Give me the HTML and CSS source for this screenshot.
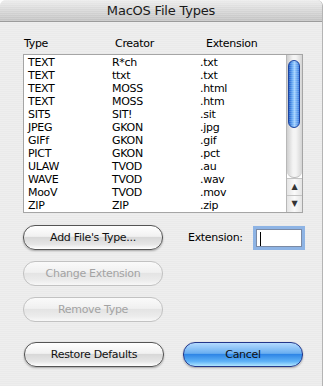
FILE: index.html
```html
<!DOCTYPE html>
<html lang="en">
<head>
    <meta charset="UTF-8">
    <title>MacOS File Types</title>
    <link rel="stylesheet" href="styles.css">
</head>
<body>
    <div class="window">
        <div class="titlebar">MacOS File Types</div>

        <div class="content">
            <!-- Column headers -->
            <div class="list-head">
                <span class="col-type">Type</span>
                <span class="col-creator">Creator</span>
                <span>Extension</span>
            </div>

            <!-- File type list with scroll bar -->
            <div class="list">
                <div class="rows">
                    <div class="row"><span class="col-type">TEXT</span><span class="col-creator">R*ch</span><span>.txt</span></div>
                    <div class="row"><span class="col-type">TEXT</span><span class="col-creator">ttxt</span><span>.txt</span></div>
                    <div class="row"><span class="col-type">TEXT</span><span class="col-creator">MOSS</span><span>.html</span></div>
                    <div class="row"><span class="col-type">TEXT</span><span class="col-creator">MOSS</span><span>.htm</span></div>
                    <div class="row"><span class="col-type">SIT5</span><span class="col-creator">SIT!</span><span>.sit</span></div>
                    <div class="row"><span class="col-type">JPEG</span><span class="col-creator">GKON</span><span>.jpg</span></div>
                    <div class="row"><span class="col-type">GIFf</span><span class="col-creator">GKON</span><span>.gif</span></div>
                    <div class="row"><span class="col-type">PICT</span><span class="col-creator">GKON</span><span>.pct</span></div>
                    <div class="row"><span class="col-type">ULAW</span><span class="col-creator">TVOD</span><span>.au</span></div>
                    <div class="row"><span class="col-type">WAVE</span><span class="col-creator">TVOD</span><span>.wav</span></div>
                    <div class="row"><span class="col-type">MooV</span><span class="col-creator">TVOD</span><span>.mov</span></div>
                    <div class="row"><span class="col-type">ZIP</span><span class="col-creator">ZIP</span><span>.zip</span></div>
                </div>
                <div class="scrollbar">
                    <div class="track">
                        <div class="thumb"></div>
                    </div>
                    <div class="arrow">&#9650;</div>
                    <div class="arrow">&#9660;</div>
                </div>
            </div>

            <!-- Actions -->
            <div class="actions">
                <div class="btn-col">
                    <div class="btn">Add File's Type...</div>
                    <div class="btn disabled">Change Extension</div>
                    <div class="btn disabled">Remove Type</div>
                </div>
                <div class="ext-field">
                    <span>Extension:</span>
                    <div class="input"><span class="caret"></span></div>
                </div>
            </div>

            <div class="bottom">
                <div class="btn">Restore Defaults</div>
                <div class="btn default">Cancel</div>
            </div>
        </div>
    </div>
</body>
</html>
```

FILE: styles.css
```css
/* General */
body {
    margin: 0;
    background: #fff;
    font-family: 'DejaVu Sans', sans-serif;
    font-size: 11px;
    letter-spacing: -0.3px;
    color: #000;
}

.window {
    width: 322px;
    height: 386px;
    border-right: 1px solid #b4b4b4;
    border-radius: 6px 6px 0 0;
    overflow: hidden;
    background: repeating-linear-gradient(to bottom, #eeeeee 0 1px, #eaeaea 1px 2px);
}

/* Title bar */
.titlebar {
    height: 21px;
    line-height: 21px;
    text-align: center;
    font-size: 13px;
    letter-spacing: -0.2px;
    color: #1a1a1a;
    border-bottom: 1px solid #9c9c9c;
    background:
        repeating-linear-gradient(to bottom, rgba(255,255,255,0.18) 0 1px, transparent 1px 2px),
        linear-gradient(to bottom, #ececec, #d6d6d6 50%, #c2c2c2);
}

.content {
    padding: 15px 0 0 23px;
}

/* List */
.list-head {
    display: flex;
    line-height: 13px;
    padding-left: 1px;
    margin-bottom: 4px;
}

.list-head .col-type { width: 91px; }
.list-head .col-creator { width: 91px; }

.list {
    display: flex;
    width: 280px;
    height: 159px;
    box-sizing: border-box;
    border: 1px solid #a5a5a5;
    background: #fff;
}

.rows {
    flex: 1;
    padding: 1px 0 0 4px;
}

.row {
    display: flex;
    line-height: 13px;
}

.row .col-type { width: 84px; }
.row .col-creator { width: 88px; }

/* Scroll bar */
.scrollbar {
    width: 15px;
    display: flex;
    flex-direction: column;
    border-left: 1px solid #b8b8b8;
}

.track {
    flex: 1;
    padding-top: 5px;
    border-radius: 0 0 7px 7px;
    border-bottom: 1px solid #bdbdbd;
    background: linear-gradient(to right, #cfcfcf, #f4f4f4 40%, #f4f4f4 60%, #d4d4d4);
}

.thumb {
    width: 12px;
    height: 68px;
    margin-left: 1px;
    border-radius: 6px;
    box-sizing: border-box;
    border: 1px solid #1d45a0;
    background:
        repeating-linear-gradient(to bottom, rgba(255,255,255,0.15) 0 1px, transparent 1px 2px),
        linear-gradient(to right, #1f5cc8, #5ea3f0 30%, #9fd0ff 55%, #3b7fe0);
}

.arrow {
    height: 16px;
    line-height: 16px;
    text-align: center;
    font-size: 8px;
    color: #333;
    background: linear-gradient(to right, #e4e4e4, #fafafa 50%, #e4e4e4);
    border-top: 1px solid #c4c4c4;
}

/* Buttons */
.actions {
    display: flex;
    margin-top: 12px;
}

.btn-col {
    display: flex;
    flex-direction: column;
    gap: 11px;
}

.btn {
    width: 140px;
    height: 25px;
    line-height: 23px;
    box-sizing: border-box;
    text-align: center;
    color: #111;
    border: 1px solid #555;
    border-radius: 12px;
    box-shadow: 0 1px 2px rgba(0, 0, 0, 0.3);
    background: linear-gradient(to bottom, #ffffff, #f1f1f1 45%, #d8d8d8 50%, #e6e6e6 80%, #ffffff);
}

.btn.disabled {
    color: #a3a3a3;
    border-color: #c2c2c2;
    box-shadow: none;
    background: linear-gradient(to bottom, #fafafa, #f0f0f0 45%, #e4e4e4 50%, #ececec 80%, #f8f8f8);
}

.btn.default {
    width: 120px;
    border-color: #24378a;
    background: linear-gradient(to bottom, #b4dbff, #6aaef0 45%, #2f86e6 50%, #5fb2f7 80%, #b0e6ff);
}

.ext-field {
    display: flex;
    align-items: center;
    gap: 13px;
    height: 25px;
    margin-left: 25px;
}

.input {
    width: 46px;
    height: 18px;
    box-sizing: border-box;
    padding: 2px 0 0 3px;
    background: #fff;
    border: 1px solid #7b8aa4;
    box-shadow: 0 0 0 3px rgba(110, 160, 225, 0.75);
}

.caret {
    display: block;
    width: 1px;
    height: 14px;
    background: #000;
}

.bottom {
    display: flex;
    gap: 19px;
    margin-top: 20px;
    padding-left: 1px;
}
```
